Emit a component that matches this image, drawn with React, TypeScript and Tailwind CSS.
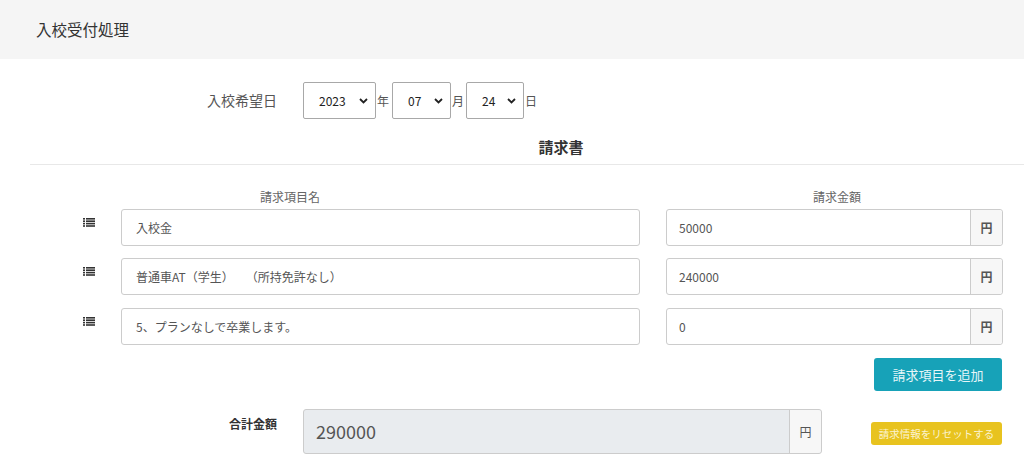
import React from "react";

const font = { fontFamily: '"Noto Sans CJK JP", "Noto Sans", sans-serif' };

function Chevron() {
  return (
    <svg width="9" height="6" viewBox="0 0 9 6" className="shrink-0">
      <path d="M1 1 L4.5 4.5 L8 1" fill="none" stroke="#222" strokeWidth="1.8" />
    </svg>
  );
}

function Sel({ value, w }: { value: string; w: string }) {
  return (
    <div className={`${w} h-[37px] border border-[#a8a8a8] rounded-[2px] flex items-center justify-between pl-[15px] pr-[7px] text-[12px] text-[#222] bg-white`}>
      <span>{value}</span>
      <Chevron />
    </div>
  );
}

function ListIcon() {
  return (
    <svg width="12" height="9" viewBox="0 0 12 9" className="mt-[9px]">
      {[0, 2.4, 4.8, 7.2].map((y) => (
        <g key={y}>
          <rect x="0" y={y} width="2" height="1.6" fill="#333" />
          <rect x="3" y={y} width="9" height="1.6" fill="#333" />
        </g>
      ))}
    </svg>
  );
}

function Row({ name, amount, mt }: { name: string; amount: string; mt: string }) {
  return (
    <div className={`flex ${mt}`}>
      <div className="w-[121px] flex justify-start pl-[83px]">
        <ListIcon />
      </div>
      <div className="w-[519px] h-[37px] border border-[#ccc] rounded-[3px] flex items-center pl-[14px] text-[12px] text-[#555] whitespace-pre">
        {name}
      </div>
      <div className="ml-[26px] w-[337px] h-[37px] border border-[#ccc] rounded-[3px] flex">
        <div className="flex-1 flex items-center pl-[12px] text-[12px] text-[#555]">{amount}</div>
        <div className="w-[32px] border-l border-[#ccc] bg-[#f7f7f7] flex items-center justify-center text-[12px] font-bold text-[#555] rounded-r-[3px]">
          円
        </div>
      </div>
    </div>
  );
}

export default function App() {
  return (
    <div className="w-[1024px] h-[464px] bg-white overflow-hidden text-[#333]" style={font}>
      <div className="h-[59px] bg-[#f5f5f5] flex items-center pl-[36px] text-[15.5px] text-[#333]">
        入校受付処理
      </div>

      <div className="flex items-center mt-[23px] h-[37px]">
        <div className="w-[277px] text-right text-[14px] text-[#555]">入校希望日</div>
        <div className="ml-[26px] flex items-center text-[12px] text-[#555]">
          <Sel value="2023" w="w-[73px]" />
          <span className="mx-[1px] w-[14px]">年</span>
          <Sel value="07" w="w-[59px]" />
          <span className="mx-[1px] w-[13px]">月</span>
          <Sel value="24" w="w-[58px]" />
          <span className="ml-[1px]">日</span>
        </div>
      </div>

      <div className="ml-[30px] mt-[17px] border-b border-[#e8e8e8] pb-[6px]">
        <div className="pl-[68px] text-center text-[15px] font-bold text-[#333] leading-[22px]">請求書</div>
      </div>

      <div className="flex mt-[24px] text-[12px] text-[#666] leading-[16px]">
        <div className="w-[580px] text-center">請求項目名</div>
        <div className="ml-[86px] w-[342px] text-center">請求金額</div>
      </div>

      <div className="mt-[4px] flex flex-col">
        <Row name="入校金" amount="50000" mt="mt-0" />
        <Row name="普通車AT（学生）　　（所持免許なし）" amount="240000" mt="mt-[12px]" />
        <Row name="5、プランなしで卒業します。" amount="0" mt="mt-[13px]" />
      </div>

      <div className="flex justify-end pr-[22px] mt-[13px]">
        <div className="w-[128px] h-[33px] bg-[#17a2b8] rounded-[3px] flex items-center justify-center text-[13px] text-[#e6f6f8]">
          請求項目を追加
        </div>
      </div>

      <div className="flex mt-[18px]">
        <div className="w-[277px] text-right text-[12px] font-bold text-[#333] pt-[6px]">合計金額</div>
        <div className="ml-[26px] w-[519px] h-[45px] border border-[#ccc] rounded-[3px] bg-[#e9ecef] flex">
          <div className="flex-1 flex items-center pl-[12px] text-[18px] text-[#555]">290000</div>
          <div className="w-[32px] border-l border-[#ccc] bg-[#f7f7f7] flex items-center justify-center text-[12px] text-[#555] rounded-r-[3px]">
            円
          </div>
        </div>
        <div className="flex-1 flex justify-end pr-[22px] pt-[13px]">
          <div className="w-[131px] h-[23px] bg-[#e8c31f] rounded-[3px] flex items-center justify-center text-[10.5px] text-[#fbf3d0]">
            請求情報をリセットする
          </div>
        </div>
      </div>
    </div>
  );
}
